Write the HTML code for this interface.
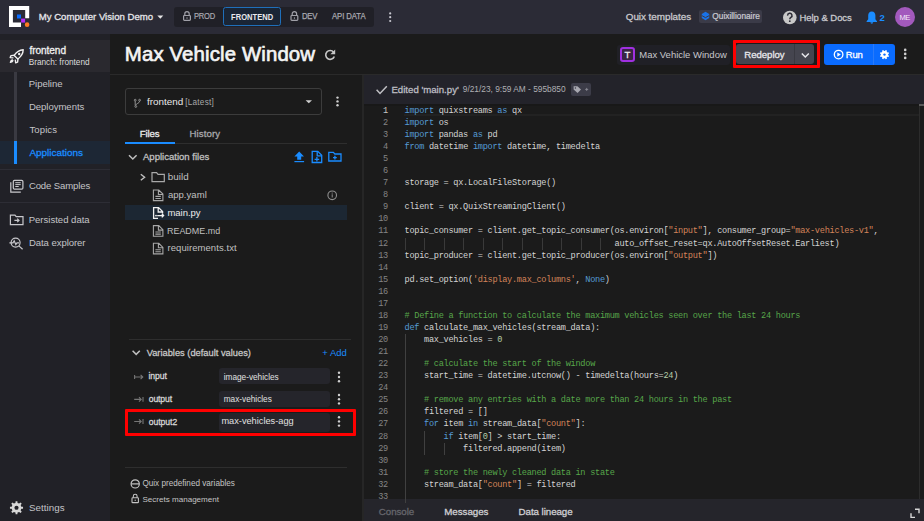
<!DOCTYPE html>
<html><head><meta charset="utf-8">
<style>
*{margin:0;padding:0;box-sizing:border-box}
html,body{width:924px;height:521px;overflow:hidden;background:#1b1b1b;font-family:"Liberation Sans",sans-serif}
.a{position:absolute;white-space:nowrap}
.r{position:absolute}
.code{position:absolute;font-family:"Liberation Mono",monospace;white-space:pre;color:#d4d4d4}
.k{color:#569cd6} .s{color:#d4845a} .c{color:#57a64a} .n{color:#b5cea8}
</style></head><body>
<div class='r' style='left:0px;top:0px;width:924px;height:34px;background:#2b2b36;border-radius:0px;'></div>
<div class='r' style='left:0px;top:34px;width:110px;height:487px;background:#212127;border-radius:0px;'></div>
<div class='r' style='left:0px;top:40px;width:110px;height:32px;background:#2a292f;border-radius:0px;'></div>
<div class='r' style='left:14px;top:72px;width:3px;height:69px;background:#3a3a42;border-radius:0px;'></div>
<div class='r' style='left:0px;top:141px;width:110px;height:23px;background:#1d2735;border-radius:0px;'></div>
<div class='r' style='left:14px;top:141px;width:3px;height:23px;background:#1a8cff;border-radius:0px;'></div>
<div class='r' style='left:0px;top:169px;width:110px;height:1px;background:#2d2d35;border-radius:0px;'></div>
<div class='r' style='left:0px;top:202px;width:110px;height:1px;background:#2d2d35;border-radius:0px;'></div>
<div class='r' style='left:110px;top:73.5px;width:814px;height:1.7999999999999972px;background:#2a2a2a;border-radius:0px;'></div>
<div class='r' style='left:361.6px;top:75px;width:2.1999999999999886px;height:446px;background:#262626;border-radius:0px;'></div>
<div class='r' style='left:363.8px;top:75.3px;width:560.2px;height:28.700000000000003px;background:#23232a;border-radius:0px;'></div>
<div class='r' style='left:363.8px;top:104px;width:560.2px;height:394.8px;background:#1b1b1b;border-radius:0px;'></div>
<div class='r' style='left:363.8px;top:104px;width:560.2px;height:1.5px;background:#181818;border-radius:0px;'></div>
<div class='r' style='left:363.8px;top:498.8px;width:560.2px;height:22.19999999999999px;background:#25252b;border-radius:0px;'></div>
<div class='r' style='left:173.6px;top:6.5px;width:200.4px;height:20.1px;background:#202027;border-radius:3px;'></div>
<div class='r' style='left:223.3px;top:7.3px;width:57.69999999999999px;height:18.7px;background:#1a2535;border-radius:2.5px;border:1.3px solid #1f6fba'></div>
<div class='r' style='left:698.8px;top:9.5px;width:63.200000000000045px;height:13.5px;background:#3b3b48;border-radius:2px;'></div>
<div class='r' style='left:895px;top:7.4px;width:19.5px;height:19.5px;background:#a259bd;border-radius:10px;'></div>
<div class='r' style='left:617.2px;top:45px;width:112.39999999999998px;height:19.700000000000003px;background:#202026;border-radius:3px;'></div>
<div class='r' style='left:619.75px;top:46.8px;width:15.549999999999955px;height:15.5px;background:#3a2545;border-radius:3px;border:2px solid #a030e0'></div>
<div class='r' style='left:736.4px;top:44.3px;width:77.60000000000002px;height:20.200000000000003px;background:#45454f;border-radius:3px;'></div>
<div class='r' style='left:794.3px;top:44.3px;width:1.0px;height:20.200000000000003px;background:#393941;border-radius:0px;'></div>
<div class='r' style='left:824.2px;top:44.4px;width:70.79999999999995px;height:20.500000000000007px;background:#0a6cff;border-radius:3px;'></div>
<div class='r' style='left:873px;top:44.4px;width:1px;height:20.500000000000007px;background:#2a7af8;border-radius:0px;'></div>
<div class='r' style='left:125.2px;top:87.7px;width:196.40000000000003px;height:27.200000000000003px;background:transparent;border-radius:3px;border:1px solid #3c3c3c'></div>
<div class='r' style='left:125px;top:142.8px;width:222px;height:1.0px;background:#2e2e2e;border-radius:0px;'></div>
<div class='r' style='left:125.2px;top:141.6px;width:49.499999999999986px;height:2.4000000000000057px;background:#1a8cff;border-radius:0px;'></div>
<div class='r' style='left:125px;top:205.2px;width:222.2px;height:15.300000000000011px;background:#1c2733;border-radius:0px;'></div>
<div class='r' style='left:129px;top:339px;width:222px;height:1px;background:#2e2e2e;border-radius:0px;'></div>
<div class='r' style='left:125.3px;top:467px;width:221.7px;height:1px;background:#2e2e2e;border-radius:0px;'></div>
<div class='r' style='left:219.2px;top:368.2px;width:111.30000000000001px;height:16.30000000000001px;background:#25252b;border-radius:3px;'></div>
<div class='r' style='left:219.2px;top:390.5px;width:111.30000000000001px;height:16.30000000000001px;background:#25252b;border-radius:3px;'></div>
<div class='r' style='left:219.2px;top:412.7px;width:111.30000000000001px;height:19.5px;background:#25252b;border-radius:3px;'></div>
<div class='r' style='left:570.6px;top:82.8px;width:20.899999999999977px;height:13.100000000000009px;background:#3c3c48;border-radius:2px;'></div>
<div class='r' style='left:404px;top:114px;width:515px;height:2px;background:#222222;border-radius:0px;'></div>
<div class='r' style='left:919px;top:104px;width:1px;height:394.8px;background:#2c2c2c;border-radius:0px;'></div>
<div class='r' style='left:919px;top:104px;width:5px;height:2px;background:#5a5a5a;border-radius:0px;'></div>
<div class='r' style='left:404.7px;top:237.54px;width:1.0px;height:12.060000000000002px;background:#3a3a3a;border-radius:0px;'></div>
<div class='r' style='left:424.25px;top:237.54px;width:1.0px;height:12.060000000000002px;background:#3a3a3a;border-radius:0px;'></div>
<div class='r' style='left:443.8px;top:237.54px;width:1.0px;height:12.060000000000002px;background:#3a3a3a;border-radius:0px;'></div>
<div class='r' style='left:463.36px;top:237.54px;width:1.0px;height:12.060000000000002px;background:#3a3a3a;border-radius:0px;'></div>
<div class='r' style='left:482.91px;top:237.54px;width:1.0px;height:12.060000000000002px;background:#3a3a3a;border-radius:0px;'></div>
<div class='r' style='left:502.46px;top:237.54px;width:1.0px;height:12.060000000000002px;background:#3a3a3a;border-radius:0px;'></div>
<div class='r' style='left:522.01px;top:237.54px;width:1.0px;height:12.060000000000002px;background:#3a3a3a;border-radius:0px;'></div>
<div class='r' style='left:541.56px;top:237.54px;width:1.0px;height:12.060000000000002px;background:#3a3a3a;border-radius:0px;'></div>
<div class='r' style='left:561.12px;top:237.54px;width:1.0px;height:12.060000000000002px;background:#3a3a3a;border-radius:0px;'></div>
<div class='r' style='left:580.67px;top:237.54px;width:1.0px;height:12.060000000000002px;background:#3a3a3a;border-radius:0px;'></div>
<div class='r' style='left:600.22px;top:237.54px;width:1.0px;height:12.060000000000002px;background:#3a3a3a;border-radius:0px;'></div>
<div class='r' style='left:404.7px;top:334.02px;width:1.0px;height:168.84000000000003px;background:#404040;border-radius:0px;'></div>
<div class='r' style='left:424.25px;top:430.5px;width:1.0px;height:24.120000000000005px;background:#404040;border-radius:0px;'></div>
<div class='r' style='left:443.8px;top:442.56px;width:1.0px;height:12.060000000000002px;background:#404040;border-radius:0px;'></div>
<div class='code' style='left:404.5px;top:104.88px;font-size:8.6px;line-height:12.06px;letter-spacing:-0.272px'><span class='k'>import</span> quixstreams <span class='k'>as</span> qx</div>
<div class='code' style='left:360px;width:28.0px;text-align:right;top:104.88px;font-size:8.6px;line-height:12.06px;letter-spacing:-0.272px;color:#c6c6c6'>1</div>
<div class='code' style='left:404.5px;top:116.94px;font-size:8.6px;line-height:12.06px;letter-spacing:-0.272px'><span class='k'>import</span> os</div>
<div class='code' style='left:360px;width:28.0px;text-align:right;top:116.94px;font-size:8.6px;line-height:12.06px;letter-spacing:-0.272px;color:#858585'>2</div>
<div class='code' style='left:404.5px;top:129.00px;font-size:8.6px;line-height:12.06px;letter-spacing:-0.272px'><span class='k'>import</span> pandas <span class='k'>as</span> pd</div>
<div class='code' style='left:360px;width:28.0px;text-align:right;top:129.00px;font-size:8.6px;line-height:12.06px;letter-spacing:-0.272px;color:#858585'>3</div>
<div class='code' style='left:404.5px;top:141.06px;font-size:8.6px;line-height:12.06px;letter-spacing:-0.272px'><span class='k'>from</span> datetime <span class='k'>import</span> datetime, timedelta</div>
<div class='code' style='left:360px;width:28.0px;text-align:right;top:141.06px;font-size:8.6px;line-height:12.06px;letter-spacing:-0.272px;color:#858585'>4</div>
<div class='code' style='left:404.5px;top:153.12px;font-size:8.6px;line-height:12.06px;letter-spacing:-0.272px'></div>
<div class='code' style='left:360px;width:28.0px;text-align:right;top:153.12px;font-size:8.6px;line-height:12.06px;letter-spacing:-0.272px;color:#858585'>5</div>
<div class='code' style='left:404.5px;top:165.18px;font-size:8.6px;line-height:12.06px;letter-spacing:-0.272px'></div>
<div class='code' style='left:360px;width:28.0px;text-align:right;top:165.18px;font-size:8.6px;line-height:12.06px;letter-spacing:-0.272px;color:#858585'>6</div>
<div class='code' style='left:404.5px;top:177.24px;font-size:8.6px;line-height:12.06px;letter-spacing:-0.272px'>storage = qx.LocalFileStorage()</div>
<div class='code' style='left:360px;width:28.0px;text-align:right;top:177.24px;font-size:8.6px;line-height:12.06px;letter-spacing:-0.272px;color:#858585'>7</div>
<div class='code' style='left:404.5px;top:189.30px;font-size:8.6px;line-height:12.06px;letter-spacing:-0.272px'></div>
<div class='code' style='left:360px;width:28.0px;text-align:right;top:189.30px;font-size:8.6px;line-height:12.06px;letter-spacing:-0.272px;color:#858585'>8</div>
<div class='code' style='left:404.5px;top:201.36px;font-size:8.6px;line-height:12.06px;letter-spacing:-0.272px'>client = qx.QuixStreamingClient()</div>
<div class='code' style='left:360px;width:28.0px;text-align:right;top:201.36px;font-size:8.6px;line-height:12.06px;letter-spacing:-0.272px;color:#858585'>9</div>
<div class='code' style='left:404.5px;top:213.42px;font-size:8.6px;line-height:12.06px;letter-spacing:-0.272px'></div>
<div class='code' style='left:360px;width:28.0px;text-align:right;top:213.42px;font-size:8.6px;line-height:12.06px;letter-spacing:-0.272px;color:#858585'>10</div>
<div class='code' style='left:404.5px;top:225.48px;font-size:8.6px;line-height:12.06px;letter-spacing:-0.272px'>topic_consumer = client.get_topic_consumer(os.environ[<span class='s'>"input"</span>], consumer_group=<span class='s'>"max-vehicles-v1"</span>,</div>
<div class='code' style='left:360px;width:28.0px;text-align:right;top:225.48px;font-size:8.6px;line-height:12.06px;letter-spacing:-0.272px;color:#858585'>11</div>
<div class='code' style='left:404.5px;top:237.54px;font-size:8.6px;line-height:12.06px;letter-spacing:-0.272px'>                                           auto_offset_reset=qx.AutoOffsetReset.Earliest)</div>
<div class='code' style='left:360px;width:28.0px;text-align:right;top:237.54px;font-size:8.6px;line-height:12.06px;letter-spacing:-0.272px;color:#858585'>12</div>
<div class='code' style='left:404.5px;top:249.60px;font-size:8.6px;line-height:12.06px;letter-spacing:-0.272px'>topic_producer = client.get_topic_producer(os.environ[<span class='s'>"output"</span>])</div>
<div class='code' style='left:360px;width:28.0px;text-align:right;top:249.60px;font-size:8.6px;line-height:12.06px;letter-spacing:-0.272px;color:#858585'>13</div>
<div class='code' style='left:404.5px;top:261.66px;font-size:8.6px;line-height:12.06px;letter-spacing:-0.272px'></div>
<div class='code' style='left:360px;width:28.0px;text-align:right;top:261.66px;font-size:8.6px;line-height:12.06px;letter-spacing:-0.272px;color:#858585'>14</div>
<div class='code' style='left:404.5px;top:273.72px;font-size:8.6px;line-height:12.06px;letter-spacing:-0.272px'>pd.set_option(<span class='s'>'display.max_columns'</span>, <span class='k'>None</span>)</div>
<div class='code' style='left:360px;width:28.0px;text-align:right;top:273.72px;font-size:8.6px;line-height:12.06px;letter-spacing:-0.272px;color:#858585'>15</div>
<div class='code' style='left:404.5px;top:285.78px;font-size:8.6px;line-height:12.06px;letter-spacing:-0.272px'></div>
<div class='code' style='left:360px;width:28.0px;text-align:right;top:285.78px;font-size:8.6px;line-height:12.06px;letter-spacing:-0.272px;color:#858585'>16</div>
<div class='code' style='left:404.5px;top:297.84px;font-size:8.6px;line-height:12.06px;letter-spacing:-0.272px'></div>
<div class='code' style='left:360px;width:28.0px;text-align:right;top:297.84px;font-size:8.6px;line-height:12.06px;letter-spacing:-0.272px;color:#858585'>17</div>
<div class='code' style='left:404.5px;top:309.90px;font-size:8.6px;line-height:12.06px;letter-spacing:-0.272px'><span class='c'># Define a function to calculate the maximum vehicles seen over the last 24 hours</span></div>
<div class='code' style='left:360px;width:28.0px;text-align:right;top:309.90px;font-size:8.6px;line-height:12.06px;letter-spacing:-0.272px;color:#858585'>18</div>
<div class='code' style='left:404.5px;top:321.96px;font-size:8.6px;line-height:12.06px;letter-spacing:-0.272px'><span class='k'>def</span> calculate_max_vehicles(stream_data):</div>
<div class='code' style='left:360px;width:28.0px;text-align:right;top:321.96px;font-size:8.6px;line-height:12.06px;letter-spacing:-0.272px;color:#858585'>19</div>
<div class='code' style='left:404.5px;top:334.02px;font-size:8.6px;line-height:12.06px;letter-spacing:-0.272px'>    max_vehicles = <span class='n'>0</span></div>
<div class='code' style='left:360px;width:28.0px;text-align:right;top:334.02px;font-size:8.6px;line-height:12.06px;letter-spacing:-0.272px;color:#858585'>20</div>
<div class='code' style='left:404.5px;top:346.08px;font-size:8.6px;line-height:12.06px;letter-spacing:-0.272px'></div>
<div class='code' style='left:360px;width:28.0px;text-align:right;top:346.08px;font-size:8.6px;line-height:12.06px;letter-spacing:-0.272px;color:#858585'>21</div>
<div class='code' style='left:404.5px;top:358.14px;font-size:8.6px;line-height:12.06px;letter-spacing:-0.272px'><span class='c'>    # calculate the start of the window</span></div>
<div class='code' style='left:360px;width:28.0px;text-align:right;top:358.14px;font-size:8.6px;line-height:12.06px;letter-spacing:-0.272px;color:#858585'>22</div>
<div class='code' style='left:404.5px;top:370.20px;font-size:8.6px;line-height:12.06px;letter-spacing:-0.272px'>    start_time = datetime.utcnow() - timedelta(hours=<span class='n'>24</span>)</div>
<div class='code' style='left:360px;width:28.0px;text-align:right;top:370.20px;font-size:8.6px;line-height:12.06px;letter-spacing:-0.272px;color:#858585'>23</div>
<div class='code' style='left:404.5px;top:382.26px;font-size:8.6px;line-height:12.06px;letter-spacing:-0.272px'></div>
<div class='code' style='left:360px;width:28.0px;text-align:right;top:382.26px;font-size:8.6px;line-height:12.06px;letter-spacing:-0.272px;color:#858585'>24</div>
<div class='code' style='left:404.5px;top:394.32px;font-size:8.6px;line-height:12.06px;letter-spacing:-0.272px'><span class='c'>    # remove any entries with a date more than 24 hours in the past</span></div>
<div class='code' style='left:360px;width:28.0px;text-align:right;top:394.32px;font-size:8.6px;line-height:12.06px;letter-spacing:-0.272px;color:#858585'>25</div>
<div class='code' style='left:404.5px;top:406.38px;font-size:8.6px;line-height:12.06px;letter-spacing:-0.272px'>    filtered = []</div>
<div class='code' style='left:360px;width:28.0px;text-align:right;top:406.38px;font-size:8.6px;line-height:12.06px;letter-spacing:-0.272px;color:#858585'>26</div>
<div class='code' style='left:404.5px;top:418.44px;font-size:8.6px;line-height:12.06px;letter-spacing:-0.272px'>    <span class='k'>for</span> item <span class='k'>in</span> stream_data[<span class='s'>"count"</span>]:</div>
<div class='code' style='left:360px;width:28.0px;text-align:right;top:418.44px;font-size:8.6px;line-height:12.06px;letter-spacing:-0.272px;color:#858585'>27</div>
<div class='code' style='left:404.5px;top:430.50px;font-size:8.6px;line-height:12.06px;letter-spacing:-0.272px'>        <span class='k'>if</span> item[<span class='n'>0</span>] &gt; start_time:</div>
<div class='code' style='left:360px;width:28.0px;text-align:right;top:430.50px;font-size:8.6px;line-height:12.06px;letter-spacing:-0.272px;color:#858585'>28</div>
<div class='code' style='left:404.5px;top:442.56px;font-size:8.6px;line-height:12.06px;letter-spacing:-0.272px'>            filtered.append(item)</div>
<div class='code' style='left:360px;width:28.0px;text-align:right;top:442.56px;font-size:8.6px;line-height:12.06px;letter-spacing:-0.272px;color:#858585'>29</div>
<div class='code' style='left:404.5px;top:454.62px;font-size:8.6px;line-height:12.06px;letter-spacing:-0.272px'></div>
<div class='code' style='left:360px;width:28.0px;text-align:right;top:454.62px;font-size:8.6px;line-height:12.06px;letter-spacing:-0.272px;color:#858585'>30</div>
<div class='code' style='left:404.5px;top:466.68px;font-size:8.6px;line-height:12.06px;letter-spacing:-0.272px'><span class='c'>    # store the newly cleaned data in state</span></div>
<div class='code' style='left:360px;width:28.0px;text-align:right;top:466.68px;font-size:8.6px;line-height:12.06px;letter-spacing:-0.272px;color:#858585'>31</div>
<div class='code' style='left:404.5px;top:478.74px;font-size:8.6px;line-height:12.06px;letter-spacing:-0.272px'>    stream_data[<span class='s'>"count"</span>] = filtered</div>
<div class='code' style='left:360px;width:28.0px;text-align:right;top:478.74px;font-size:8.6px;line-height:12.06px;letter-spacing:-0.272px;color:#858585'>32</div>
<div class='code' style='left:404.5px;top:490.80px;font-size:8.6px;line-height:12.06px;letter-spacing:-0.272px'></div>
<div class='code' style='left:360px;width:28.0px;text-align:right;top:490.80px;font-size:8.6px;line-height:12.06px;letter-spacing:-0.272px;color:#858585'>33</div>
<div class='a' style='left:38.75px;top:12.00px;font-size:9.59px;line-height:9.59px;font-weight:normal;color:#e6e6ea;letter-spacing:0.000px;-webkit-text-stroke:0.288px #e6e6ea;'>My Computer Vision Demo</div>
<div class='a' style='left:194.30px;top:12.00px;font-size:8.6px;line-height:8.6px;font-weight:normal;color:#a8a8b0;letter-spacing:-0.284px;-webkit-text-stroke:0.2px #a8a8b0;transform:scaleX(0.88);transform-origin:0 0;'>PROD</div>
<div class='a' style='left:231.20px;top:13.00px;font-size:8.4px;line-height:8.4px;font-weight:bold;color:#e8e8ec;letter-spacing:0.063px;transform:scaleX(0.9);transform-origin:0 0;'>FRONTEND</div>
<div class='a' style='left:301.50px;top:12.00px;font-size:8.6px;line-height:8.6px;font-weight:normal;color:#a8a8b0;letter-spacing:-0.278px;-webkit-text-stroke:0.25px #a8a8b0;transform:scaleX(0.9);transform-origin:0 0;'>DEV</div>
<div class='a' style='left:332.00px;top:12.00px;font-size:8.6px;line-height:8.6px;font-weight:normal;color:#a8a8b0;letter-spacing:-0.087px;-webkit-text-stroke:0.25px #a8a8b0;transform:scaleX(0.9);transform-origin:0 0;'>API DATA</div>
<div class='a' style='left:625.75px;top:12.00px;font-size:9.88px;line-height:9.88px;font-weight:normal;color:#c8c8cc;letter-spacing:-0.038px;-webkit-text-stroke:0.296px #c8c8cc;'>Quix templates</div>
<div class='a' style='left:712.35px;top:12.00px;font-size:8.31px;line-height:8.31px;font-weight:normal;color:#c8c8d0;letter-spacing:0.000px;-webkit-text-stroke:0.249px #c8c8d0;'>Quixillionaire</div>
<div class='a' style='left:799.50px;top:13.00px;font-size:9.49px;line-height:9.49px;font-weight:normal;color:#c8c8cc;letter-spacing:-0.040px;-webkit-text-stroke:0.285px #c8c8cc;'>Help &amp; Docs</div>
<div class='a' style='left:879.55px;top:13.00px;font-size:9.59px;line-height:9.59px;font-weight:bold;color:#1a8cff;letter-spacing:0.000px;'>2</div>
<div class='a' style='left:899.50px;top:14.00px;font-size:7.5px;line-height:7.5px;font-weight:normal;color:#f4e8f8;letter-spacing:-0.500px;'>ME</div>
<div class='a' style='left:29.40px;top:46.00px;font-size:10.11px;line-height:10.11px;font-weight:normal;color:#f0f0f0;letter-spacing:-0.057px;-webkit-text-stroke:0.303px #f0f0f0;'>frontend</div>
<div class='a' style='left:28.65px;top:59.00px;font-size:8.26px;line-height:8.26px;font-weight:normal;color:#dcdcdc;letter-spacing:0.000px;'>Branch: frontend</div>
<div class='a' style='left:28.65px;top:79.00px;font-size:9.55px;line-height:9.55px;font-weight:normal;color:#c4c4c8;letter-spacing:0.000px;'>Pipeline</div>
<div class='a' style='left:28.95px;top:102.00px;font-size:9.55px;line-height:9.55px;font-weight:normal;color:#c4c4c8;letter-spacing:-0.035px;'>Deployments</div>
<div class='a' style='left:29.45px;top:125.00px;font-size:9.55px;line-height:9.55px;font-weight:normal;color:#c4c4c8;letter-spacing:0.100px;'>Topics</div>
<div class='a' style='left:29.40px;top:148.00px;font-size:9.94px;line-height:9.94px;font-weight:normal;color:#1a8cff;letter-spacing:0.000px;-webkit-text-stroke:0.298px #1a8cff;'>Applications</div>
<div class='a' style='left:28.90px;top:181.00px;font-size:9.55px;line-height:9.55px;font-weight:normal;color:#c4c4c8;letter-spacing:-0.114px;'>Code Samples</div>
<div class='a' style='left:28.65px;top:215.00px;font-size:9.55px;line-height:9.55px;font-weight:normal;color:#c4c4c8;letter-spacing:0.000px;'>Persisted data</div>
<div class='a' style='left:28.95px;top:238.00px;font-size:9.55px;line-height:9.55px;font-weight:normal;color:#c4c4c8;letter-spacing:-0.058px;'>Data explorer</div>
<div class='a' style='left:28.90px;top:503.00px;font-size:9.75px;line-height:9.75px;font-weight:normal;color:#c4c4c8;letter-spacing:0.057px;'>Settings</div>
<div class='a' style='left:124.85px;top:44.00px;font-size:20.4px;line-height:20.4px;font-weight:normal;color:#f4f4f4;letter-spacing:0.121px;-webkit-text-stroke:0.65px #f4f4f4;'>Max Vehicle Window</div>
<div class='a' style='left:624.60px;top:50.00px;font-size:9.6px;line-height:9.6px;font-weight:normal;color:#f0f0f0;letter-spacing:0.000px;-webkit-text-stroke:0.288px #f0f0f0;'>T</div>
<div class='a' style='left:639.25px;top:50.00px;font-size:9.49px;line-height:9.49px;font-weight:normal;color:#c8c8cc;letter-spacing:0.000px;'>Max Vehicle Window</div>
<div class='a' style='left:744.25px;top:50.00px;font-size:9.59px;line-height:9.59px;font-weight:normal;color:#e8e8ec;letter-spacing:-0.014px;-webkit-text-stroke:0.288px #e8e8ec;'>Redeploy</div>
<div class='a' style='left:845.80px;top:50.00px;font-size:9.53px;line-height:9.53px;font-weight:normal;color:#ffffff;letter-spacing:-0.250px;-webkit-text-stroke:0.286px #ffffff;'>Run</div>
<div class='a' style='left:147.05px;top:97.00px;font-size:9.89px;line-height:9.89px;font-weight:normal;color:#e8e8e8;letter-spacing:0.000px;'>frontend</div>
<div class='a' style='left:185.20px;top:99.00px;font-size:8.2px;line-height:8.2px;font-weight:normal;color:#a8a8a8;letter-spacing:0.250px;'>[Latest]</div>
<div class='a' style='left:139.75px;top:129.00px;font-size:9.65px;line-height:9.65px;font-weight:normal;color:#ececec;letter-spacing:-0.125px;-webkit-text-stroke:0.289px #ececec;'>Files</div>
<div class='a' style='left:189.45px;top:129.00px;font-size:9.65px;line-height:9.65px;font-weight:normal;color:#a8a8ac;letter-spacing:0.108px;-webkit-text-stroke:0.289px #a8a8ac;'>History</div>
<div class='a' style='left:143.00px;top:152.00px;font-size:9.54px;line-height:9.54px;font-weight:normal;color:#c0c0c0;letter-spacing:0.000px;-webkit-text-stroke:0.286px #c0c0c0;'>Application files</div>
<div class='a' style='left:167.65px;top:172.00px;font-size:9.8px;line-height:9.8px;font-weight:normal;color:#c0c0c0;letter-spacing:0.087px;'>build</div>
<div class='a' style='left:167.90px;top:190.00px;font-size:9.5px;line-height:9.5px;font-weight:normal;color:#c0c0c0;letter-spacing:0.043px;'>app.yaml</div>
<div class='a' style='left:167.45px;top:208.00px;font-size:9.5px;line-height:9.5px;font-weight:normal;color:#ececec;letter-spacing:-0.033px;'>main.py</div>
<div class='a' style='left:167.45px;top:226.00px;font-size:9.5px;line-height:9.5px;font-weight:normal;color:#c0c0c0;letter-spacing:0.000px;transform:scaleX(0.94);transform-origin:0 0;'>README.md</div>
<div class='a' style='left:167.45px;top:243.00px;font-size:9.5px;line-height:9.5px;font-weight:normal;color:#c0c0c0;letter-spacing:0.070px;'>requirements.txt</div>
<div class='a' style='left:146.70px;top:349.00px;font-size:9.3px;line-height:9.3px;font-weight:normal;color:#c8c8c8;letter-spacing:0.000px;-webkit-text-stroke:0.279px #c8c8c8;'>Variables (default values)</div>
<div class='a' style='left:322.30px;top:348.00px;font-size:9.47px;line-height:9.47px;font-weight:normal;color:#1a8cff;letter-spacing:-0.000px;'>+ Add</div>
<div class='a' style='left:148.50px;top:372.00px;font-size:8.6px;line-height:8.6px;font-weight:normal;color:#d8d8d8;letter-spacing:-0.062px;-webkit-text-stroke:0.258px #d8d8d8;'>input</div>
<div class='a' style='left:148.75px;top:395.00px;font-size:8.6px;line-height:8.6px;font-weight:normal;color:#d8d8d8;letter-spacing:-0.110px;-webkit-text-stroke:0.258px #d8d8d8;'>output</div>
<div class='a' style='left:148.75px;top:418.00px;font-size:8.6px;line-height:8.6px;font-weight:normal;color:#d8d8d8;letter-spacing:-0.042px;-webkit-text-stroke:0.258px #d8d8d8;'>output2</div>
<div class='a' style='left:223.70px;top:374.00px;font-size:8.25px;line-height:8.25px;font-weight:normal;color:#e0e0e0;letter-spacing:0.000px;'>image-vehicles</div>
<div class='a' style='left:223.70px;top:396.00px;font-size:8.25px;line-height:8.25px;font-weight:normal;color:#e0e0e0;letter-spacing:0.000px;'>max-vehicles</div>
<div class='a' style='left:221.40px;top:417.00px;font-size:9.23px;line-height:9.23px;font-weight:normal;color:#e0e0e0;letter-spacing:0.000px;'>max-vehicles-agg</div>
<div class='a' style='left:142.40px;top:480.00px;font-size:8.16px;line-height:8.16px;font-weight:normal;color:#c4c4c4;letter-spacing:0.000px;'>Quix predefined variables</div>
<div class='a' style='left:142.40px;top:496.00px;font-size:8.07px;line-height:8.07px;font-weight:normal;color:#c4c4c4;letter-spacing:0.000px;'>Secrets management</div>
<div class='a' style='left:391.45px;top:85.00px;font-size:9.65px;line-height:9.65px;font-weight:normal;color:#bdbdc2;letter-spacing:0.000px;-webkit-text-stroke:0.289px #bdbdc2;'>Edited 'main.py'</div>
<div class='a' style='left:462.80px;top:85.00px;font-size:8.33px;line-height:8.33px;font-weight:normal;color:#b0b0b4;letter-spacing:0.000px;'>9/21/23, 9:59 AM - 595b850</div>
<div class='a' style='left:378.75px;top:507.00px;font-size:9.75px;line-height:9.75px;font-weight:normal;color:#66666c;letter-spacing:-0.042px;-webkit-text-stroke:0.292px #66666c;'>Console</div>
<div class='a' style='left:444.25px;top:507.00px;font-size:9.75px;line-height:9.75px;font-weight:normal;color:#d0d0d4;letter-spacing:-0.029px;-webkit-text-stroke:0.292px #d0d0d4;'>Messages</div>
<div class='a' style='left:518.55px;top:507.00px;font-size:9.75px;line-height:9.75px;font-weight:normal;color:#d0d0d4;letter-spacing:-0.059px;-webkit-text-stroke:0.292px #d0d0d4;'>Data lineage</div>

<svg class='r' style='left:0;top:0' width='924' height='521' viewBox='0 0 924 521'>
<!-- logo -->
<path d='M9 6.1H29.2V18.3H25.2V10H12.9V22.6H21V26.9H9Z' fill='#fff'/>
<rect x='17' y='14.5' width='4' height='4' fill='#0a6cff'/>
<rect x='21.1' y='18.6' width='4' height='4' fill='#b52cf5'/>
<circle cx='27.1' cy='24.65' r='2.3' fill='#ff7b22'/>
<!-- caret -->
<path d='M157.3 15.5H163.3L160.3 18.8Z' fill='#e6e6e6'/>
<!-- locks -->
<g fill='none' stroke='#a0a0a8' stroke-width='1.2'>
 <path d='M184.8 15.5V13.8A2.2 2.2 0 0 1 189.2 13.8V15.5'/>
 <rect x='183.6' y='15.5' width='6.8' height='4.9' rx='0.8'/>
 <path d='M292.2 15.5V13.8A2.2 2.2 0 0 1 296.6 13.8V15.5'/>
 <rect x='291' y='15.5' width='6.8' height='4.9' rx='0.8'/>
</g>
<rect x='186.5' y='17.3' width='1' height='1.5' fill='#a0a0a8'/>
<rect x='293.9' y='17.3' width='1' height='1.5' fill='#a0a0a8'/>
<!-- top kebab -->
<g fill='#c8c8d0'><circle cx='390.2' cy='13.4' r='1.1'/><circle cx='390.2' cy='17.2' r='1.1'/><circle cx='390.2' cy='21' r='1.1'/></g>
<!-- quixillionaire icon -->
<path d='M705.5 11.8L709.2 13.9V18.1L705.5 20.2L701.8 18.1V13.9Z' fill='#1a73e8'/>
<path d='M701.8 15.6L705.5 17.6L709.2 15.6' fill='none' stroke='#3b3b48' stroke-width='1'/>
<!-- help -->
<circle cx='789.8' cy='17.5' r='6.8' fill='#c8c8c8'/>
<path d='M787.6 15.6A2.2 2.2 0 1 1 790.9 17.4C790.1 17.9 789.8 18.3 789.8 19.2' fill='none' stroke='#2b2b36' stroke-width='1.5'/>
<circle cx='789.8' cy='21.2' r='0.9' fill='#2b2b36'/>
<!-- bell -->
<path d='M871.8 11.4C869.3 11.4 868.2 13.5 868.2 15.5V19.3L866.6 21.2V22H877V21.2L875.4 19.3V15.5C875.4 13.5 874.3 11.4 871.8 11.4Z' fill='#1a8cff'/>
<path d='M870.4 22.3A1.4 1.4 0 0 0 873.2 22.3Z' fill='#1a8cff'/>
<!-- sidebar rocket -->
<g fill='none' stroke='#f0f0f0' stroke-width='1.4' stroke-linejoin='round'>
 <path d='M23.2 49.8C19.5 50 16.5 52 14.2 55.4L17.8 59C21.2 56.6 23.1 53.6 23.2 49.8Z'/>
 <path d='M14.6 55.2L11 55.6L10.2 57.6L13.4 57.9'/>
 <path d='M18 58.7L17.6 62.2L15.7 62.8L15.3 59.6'/>
 <path d='M12.8 59.8C11.2 60.2 10.6 61.4 10.4 62.4C11.4 62.2 12.6 61.7 13.2 60.2'/>
</g>
<circle cx='19.2' cy='54' r='1.2' fill='#f0f0f0'/>
<!-- code samples icon -->
<g fill='none' stroke='#c8c8cc' stroke-width='1.2'>
 <rect x='13.3' y='180.4' width='9.6' height='8.8' rx='1.2'/>
 <path d='M10.8 182.2V192.1H20.8'/>
</g>
<g fill='#c8c8cc'><rect x='15.3' y='182.2' width='5.4' height='1'/><rect x='15.3' y='184.1' width='5.4' height='1'/><rect x='15.3' y='186' width='3.4' height='1'/></g>
<!-- persisted data icon -->
<g fill='none' stroke='#c8c8cc' stroke-width='1.2'>
 <path d='M10.4 215.2H15L16.2 216.6H23V224.6H10.4Z'/>
 <path d='M14.4 220.4H19M17.2 218.6L19 220.4L17.2 222.2'/>
</g>
<!-- data explorer icon -->
<g fill='none' stroke='#c8c8cc' stroke-width='1.2'>
 <circle cx='15.6' cy='242.6' r='4.5'/>
 <path d='M18.9 245.9L22.6 249.2'/>
 <path d='M9.4 242.8H13L14.2 240.8L15.8 244.6L17 242.8H19'/>
</g>
<!-- settings gear -->
<path d='M21.29 506.70 L23.04 506.85 L23.04 508.65 L21.29 508.80 L20.63 510.39 L21.76 511.73 L20.48 513.01 L19.14 511.88 L17.55 512.54 L17.40 514.29 L15.60 514.29 L15.45 512.54 L13.86 511.88 L12.52 513.01 L11.24 511.73 L12.37 510.39 L11.71 508.80 L9.96 508.65 L9.96 506.85 L11.71 506.70 L12.37 505.11 L11.24 503.77 L12.52 502.49 L13.86 503.62 L15.45 502.96 L15.60 501.21 L17.40 501.21 L17.55 502.96 L19.14 503.62 L20.48 502.49 L21.76 503.77 L20.63 505.11Z' fill='#d8d8d8'/><circle cx='16.5' cy='507.75' r='2.1' fill='#212127'/>
<!-- refresh icon -->
<path d='M333.6 52.2A4.4 4.4 0 1 0 334.3 56.4' fill='none' stroke='#c8c8c8' stroke-width='1.6'/>
<path d='M335.2 49.4V54.2H330.4Z' fill='#c8c8c8'/>
<!-- redeploy chevron -->
<path d='M801.8 53.5L805.3 57L808.8 53.5' fill='none' stroke='#e8e8ec' stroke-width='1.5'/>
<!-- run play -->
<circle cx='838.6' cy='54.6' r='4.3' fill='none' stroke='#fff' stroke-width='1.3'/>
<path d='M837.3 52.4L840.8 54.6L837.3 56.8Z' fill='#fff'/>
<!-- run gear -->
<path d='M888.15 55.18 L889.06 55.73 L888.53 57.02 L887.49 56.77 L886.67 57.59 L886.92 58.63 L885.63 59.16 L885.08 58.25 L883.92 58.25 L883.37 59.16 L882.08 58.63 L882.33 57.59 L881.51 56.77 L880.47 57.02 L879.94 55.73 L880.85 55.18 L880.85 54.02 L879.94 53.47 L880.47 52.18 L881.51 52.43 L882.33 51.61 L882.08 50.57 L883.37 50.04 L883.92 50.95 L885.08 50.95 L885.63 50.04 L886.92 50.57 L886.67 51.61 L887.49 52.43 L888.53 52.18 L889.06 53.47 L888.15 54.02Z' fill='#fff'/><circle cx='884.5' cy='54.6' r='1.2' fill='#0a6cff'/>
<!-- header kebab -->
<g fill='#d0d0d0'><circle cx='905.2' cy='49.9' r='1.3'/><circle cx='905.2' cy='53.9' r='1.3'/><circle cx='905.2' cy='57.9' r='1.3'/></g>
<!-- branch icon -->
<g fill='none' stroke='#909090' stroke-width='1'>
 <circle cx='135.2' cy='100.2' r='0.9'/><circle cx='139.6' cy='100.2' r='0.9'/><circle cx='135.8' cy='106.5' r='0.9'/>
 <path d='M135.2 101.1V105.6M139.6 101.1C139.6 103.5 136 103.2 135.6 105.4'/>
</g>
<!-- select caret -->
<path d='M305.6 100.2H312L308.8 103.2Z' fill='#d0d0d0'/>
<!-- mid kebab -->
<g fill='#d0d0d0'><circle cx='337.5' cy='97.6' r='1.2'/><circle cx='337.5' cy='101.4' r='1.2'/><circle cx='337.5' cy='105.2' r='1.2'/></g>
<!-- application files chevron -->
<path d='M129 155.2L132.8 159L136.6 155.2' fill='none' stroke='#c0c0c0' stroke-width='1.5'/>
<!-- upload -->
<path d='M299.2 151.4L304 156.4H301.2V159.8H297.2V156.4H294.4Z' fill='#1a8cff'/>
<rect x='294.4' y='161' width='9.7' height='1.2' fill='#1a8cff'/>
<!-- new file -->
<g fill='none' stroke='#1a8cff' stroke-width='1.3'>
 <path d='M312.2 151.3H317.8L321.7 155.2V162.5H312.2Z'/>
 <path d='M317.2 151.3V155.8H321.7'/>
 <path d='M316.9 157V161.6M314.6 159.3H319.2'/>
</g>
<!-- new folder -->
<g fill='none' stroke='#1a8cff' stroke-width='1.3'>
 <path d='M328.8 152.4H333.4L334.8 154H341V161H328.8Z'/>
 <path d='M334.9 155.8V159.6M333 157.7H336.8'/>
</g>
<!-- build chevron -->
<path d='M140.8 174.2L144.6 177.2L140.8 180.2' fill='none' stroke='#c0c0c0' stroke-width='1.4'/>
<!-- folder -->
<path d='M152 172.7H156.6L158 174.4H164.3V181.7H152Z' fill='none' stroke='#a8a8a8' stroke-width='1.2'/>
<!-- file icons -->
<g fill='none' stroke='#a8a8a8' stroke-width='1.1'>
 <path d='M153.4 190H158.8L162.9 194.1V200.6H153.4Z M158.4 190V194.5H162.9 M155.4 196.4H160.8 M155.4 198.5H160.8'/>
 <path d='M153.4 225.6H158.8L162.9 229.7V236.2H153.4Z M158.4 225.6V230.1H162.9 M155.4 232H160.8 M155.4 234.1H160.8'/>
 <path d='M153.4 243.3H158.8L162.9 247.4V253.9H153.4Z M158.4 243.3V247.8H162.9 M155.4 249.7H160.8 M155.4 251.8H160.8'/>
</g>
<!-- main.py icon -->
<g fill='none' stroke='#f0f0f0' stroke-width='1.3'>
 <path d='M158 218.4H153.6V207.6H158.6L162.6 211.6V213.6 M158.2 207.6V212H162.6'/>
 <path d='M157.2 215.6H163.6M161.8 213.8L163.6 215.6L161.8 217.4'/>
</g>
<circle cx='156' cy='215.6' r='0.9' fill='#f0f0f0'/>
<!-- info -->
<circle cx='332.2' cy='195.3' r='4.3' fill='none' stroke='#909090' stroke-width='1.1'/>
<rect x='331.7' y='194.3' width='1' height='3.2' fill='#909090'/><rect x='331.7' y='192.6' width='1' height='1' fill='#909090'/>
<!-- variables chevron -->
<path d='M132.6 350.8L136.2 354.4L139.8 350.8' fill='none' stroke='#c0c0c0' stroke-width='1.5'/>
<!-- +Add -->
<!-- var icons -->
<g fill='none' stroke='#767676' stroke-width='1.1'>
 <path d='M134.6 375V379M134.6 377H142.8M140.6 374.8L142.8 377L140.6 379.2'/>
 <path d='M134.2 399.4H141.2M139 397.2L141.2 399.4L139 401.6M143 397V401.8'/>
 <path d='M134.2 421.5H141.2M139 419.3L141.2 421.5L139 423.7M143 419.1V423.9'/>
</g>
<!-- var kebabs -->
<g fill='#d0d0d0'>
 <circle cx='339' cy='372.8' r='1.2'/><circle cx='339' cy='377' r='1.2'/><circle cx='339' cy='381.2' r='1.2'/>
 <circle cx='339' cy='395' r='1.2'/><circle cx='339' cy='399.2' r='1.2'/><circle cx='339' cy='403.4' r='1.2'/>
 <circle cx='339' cy='417.2' r='1.2'/><circle cx='339' cy='421.4' r='1.2'/><circle cx='339' cy='425.6' r='1.2'/>
</g>
<!-- quix predefined icon -->
<circle cx='135.2' cy='483.9' r='4.1' fill='none' stroke='#c4c4c4' stroke-width='1.2'/>
<path d='M131.2 483.9H139.2' stroke='#c4c4c4' stroke-width='1.2'/>
<!-- secrets lock -->
<g fill='none' stroke='#c4c4c4' stroke-width='1.1'>
 <path d='M133.3 497.8V496.2A1.9 1.9 0 0 1 137.1 496.2V497.8'/>
 <rect x='132' y='497.8' width='6.4' height='4.8' rx='0.7'/>
</g>
<rect x='134.7' y='499.6' width='1' height='1.4' fill='#c4c4c4'/>
<!-- check -->
<path d='M376.6 89.8L380 93.4L386.8 86.2' fill='none' stroke='#c0c0c4' stroke-width='1.5'/>
<!-- tag icon -->
<path d='M573.6 86.2H577.4L581 89.6L577.6 93L573.6 89.6Z' fill='#a8a8b0'/>
<circle cx='575.4' cy='88' r='0.7' fill='#3c3c48'/>
<path d='M585.2 89.4H588.2M586.7 87.9V90.9' stroke='#8a8a94' stroke-width='0.9'/>
<!-- expand -->
<g fill='none' stroke='#d8d8d8' stroke-width='1.4'>
 <path d='M915 509.2H919V513.2'/>
 <path d='M911 513.2V517.4H915'/>
</g>
</svg>

<div class='r' style='left:733.1px;top:40px;width:86.89999999999998px;height:27.799999999999997px;background:transparent;border-radius:1px;border:3px solid #ff0000'></div><div class='r' style='left:125.1px;top:409.2px;width:230.70000000000002px;height:26.80000000000001px;background:transparent;border-radius:1px;border:3px solid #ff0000'></div>
</body></html>
